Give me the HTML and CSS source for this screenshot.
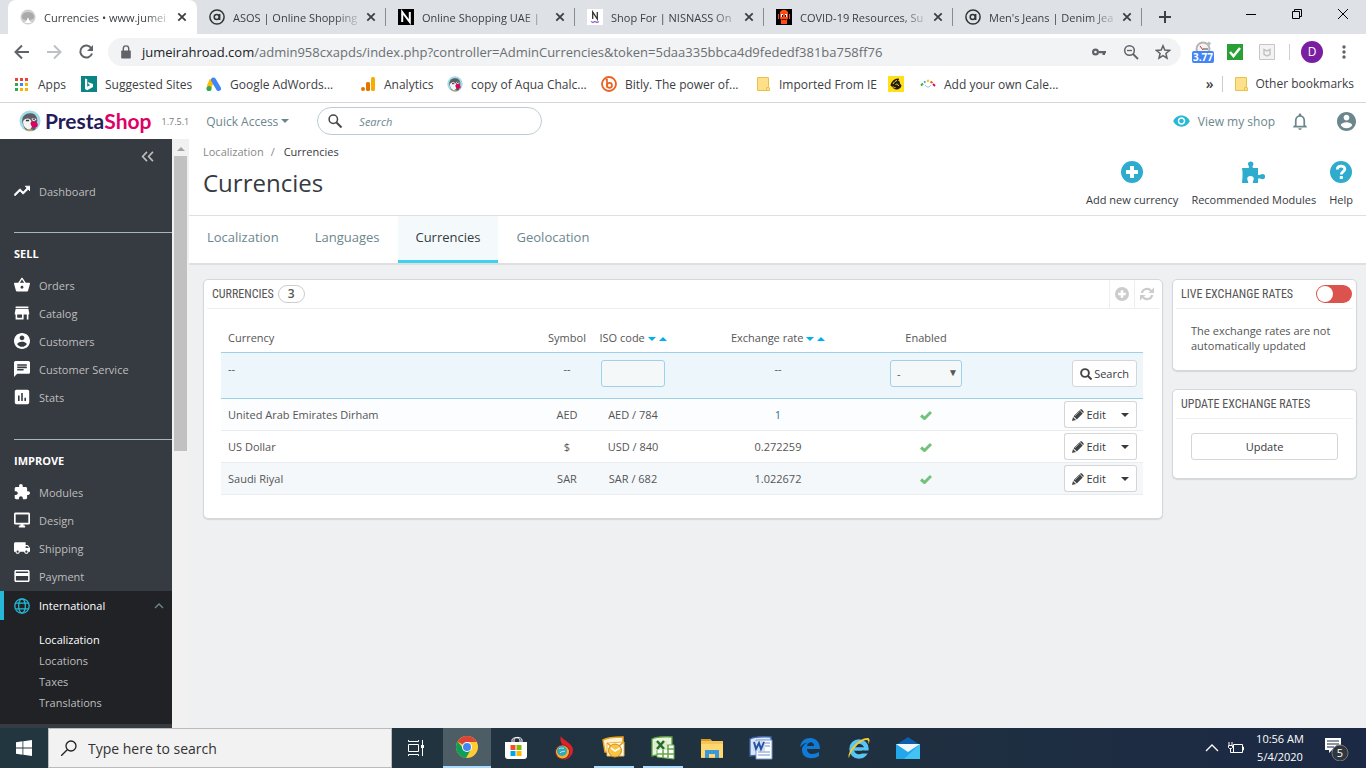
FILE: index.html
```html
<!DOCTYPE html>
<html lang="en">
<head>
<meta charset="utf-8">
<title>Currencies</title>
<link rel="stylesheet" href="styles.css">
</head>
<body>
<svg class="defs" aria-hidden="true">
  <symbol id="x" viewBox="0 0 16 16"><path d="M4.300 4.300l7.400 7.400M11.700 4.300l-7.400 7.400" stroke="#3c4043" stroke-width="1.800"/></symbol>
  <symbol id="asos" viewBox="0 0 16 16"><circle cx="8" cy="8" r="7.100" fill="none" stroke="#333" stroke-width="1.500"/><circle cx="7.700" cy="8" r="2.500" fill="none" stroke="#333" stroke-width="1.500"/><path d="M10.600 5v6" stroke="#333" stroke-width="1.600"/></symbol>
  <symbol id="folder" viewBox="0 0 16 16"><path d="M2.500 1.500h11v9.500l1 1v2.500h-12z" fill="#ffe08a" stroke="#e9c048"/><path d="M11.500 14.500v-3h2" fill="none" stroke="#e9c048"/></symbol>
  <symbol id="puffin" viewBox="0 0 24 24"><circle cx="12" cy="12" r="11.500" fill="#a4dbe8"/><path d="M3.500 13C3 6 8 3 13 3.500c5 .5 7 4 7 8.500l-2 9c-4 3-10 2-12-1z" fill="#5b5f63"/><path d="M4.500 12c2-3 6-3.500 8-1.500 1.500 1.500 1 4 1.500 6 .4 2-1 4.500-3.500 5-3.500-1-6.500-4.500-6-9.500z" fill="#f4f4f4"/><path d="M13.500 9.500c2-1.500 4.500-1 5.500 1l-3.500 2z" fill="#f4f4f4"/><path d="M7.500 11.500h3.500M15 10h2.500" stroke="#333" stroke-width="1.500"/><path d="M12.500 14c2.500-2.500 5.500-2 7.500.5 1 1.500.5 3-.5 4.500-1.500-.8-2.500-.6-3.500.5-2-.8-3.500-3-3.500-5.500z" fill="#df0067"/><path d="M8 22c1-1.500 6-1.500 8 0-2 1.300-6 1.300-8 0z" fill="#c9a06a"/></symbol>
  <symbol id="plusc" viewBox="0 0 22 22"><circle cx="11" cy="11" r="11" fill="currentColor"/><path d="M11 5v12M5 11h12" stroke="#fff" stroke-width="4"/></symbol>
  <symbol id="check" viewBox="0 0 12 10"><path d="M1 5.500l3.500 3L11 2" fill="none" stroke="#72c279" stroke-width="3"/></symbol>
  <symbol id="pencil" viewBox="0 0 12 12"><path d="M0 12l1-4 3 3zM1.600 7.200L7.500 1.300l3.200 3.200-5.900 5.900zM8.200.7c.6-.6 1.300-.6 1.900 0l1.200 1.200c.6.6.6 1.300 0 1.900l-.2.200L8 .9z" fill="#444"/><path d="M3 7l4.500-4.500" stroke="#bbb" stroke-width=".7"/></symbol>
  <symbol id="person" viewBox="2 2 20 20"><path d="M12 2C6.480 2 2 6.480 2 12s4.480 10 10 10 10-4.480 10-10S17.520 2 12 2zm0 3c1.660 0 3 1.340 3 3s-1.340 3-3 3-3-1.340-3-3 1.340-3 3-3zm0 14.200c-2.500 0-4.710-1.280-6-3.220.03-1.990 4-3.080 6-3.080 1.990 0 5.970 1.090 6 3.080-1.290 1.940-3.500 3.220-6 3.220z" fill="currentColor"/></symbol>
</svg>

<div class="tabstrip">
  <div class="tab tab-active">
    <svg class="i16" viewBox="0 0 16 16"><circle cx="8" cy="8" r="7.500" fill="#cfcfcf"/><path d="M2 9c-1-3 2-6 6-6s7 3 6 6c-2 2-4 2-6 2s-5 0-6-2z" fill="#aaa"/><path d="M4 14c2-1 3-2 3.500-5h1c.5 3 2 4 3.500 5z" fill="#fff"/></svg>
    <span class="tab-title">Currencies • www.jumei</span><button class="tab-x" aria-label="Close tab"><svg><use href="#x"/></svg></button>
  </div>
  <div class="tab"><svg class="i16"><use href="#asos"/></svg><span class="tab-title">ASOS | Online Shopping</span><button class="tab-x" aria-label="Close tab"><svg><use href="#x"/></svg></button></div>
  <div class="tab"><svg class="i16" viewBox="0 0 16 16"><path d="M0 0h16v16H0z"/><path d="M4.200 13V3l7.600 10V3" fill="none" stroke="#fff" stroke-width="2"/></svg><span class="tab-title">Online Shopping UAE |</span><button class="tab-x" aria-label="Close tab"><svg><use href="#x"/></svg></button></div>
  <div class="tab"><svg class="i16" viewBox="0 0 16 16"><path d="M0 0h16v16H0z" fill="#fff"/><path d="M5.700 10V3l4.600 7V3" fill="none" stroke="#333" stroke-width="1.300"/><path d="M4 12.500l2 1 2-1 2 1 2-1" fill="none" stroke="#8d62c8" stroke-width="1.200"/></svg><span class="tab-title">Shop For | NISNASS On</span><button class="tab-x" aria-label="Close tab"><svg><use href="#x"/></svg></button></div>
  <div class="tab"><svg class="i16" viewBox="0 0 16 16"><path d="M0 0h16v16H0z"/><path d="M4 3c2-3 6-3 8 0v6c0 1-1 1-1 2v4H5v-4c0-1-1-1-1-2zM2 5h1v5H2zM13 5h1v5h-1z" fill="#ff4a12"/><path d="M5 5h2v3H5zM9 5h2v3H9z" fill="#fff"/><path d="M6 6h1v2H6zM9 6h1v2H9z"/><path d="M5.500 10.500h5" stroke="#700"/></svg><span class="tab-title">COVID-19 Resources, Su</span><button class="tab-x" aria-label="Close tab"><svg><use href="#x"/></svg></button></div>
  <div class="tab"><svg class="i16"><use href="#asos"/></svg><span class="tab-title">Men's Jeans | Denim Jea</span><button class="tab-x" aria-label="Close tab"><svg><use href="#x"/></svg></button></div>
  <button class="newtab" aria-label="New tab"><svg class="i16" viewBox="0 0 16 16"><path d="M8 2v12M2 8h12" stroke="#3c4043" stroke-width="2"/></svg></button>
  <div class="winbtns">
    <button aria-label="Minimize"><svg viewBox="0 0 10 10"><path d="M0 5.500h10" stroke="#000"/></svg></button>
    <button aria-label="Restore"><svg viewBox="0 0 10 10"><path d="M.5 2.500h7v7h-7zM2.500 2.500v-2h7v7h-2" fill="none" stroke="#000"/></svg></button>
    <button aria-label="Close"><svg viewBox="0 0 10 10"><path d="M0 0l10 10M10 0L0 10" stroke="#000"/></svg></button>
  </div>
</div>

<div class="toolbar">
  <button class="nav" aria-label="Back"><svg viewBox="0 0 16 16"><path d="M15 8H2M8 1.500L1.500 8 8 14.500" fill="none" stroke="#5f6368" stroke-width="2"/></svg></button>
  <button class="nav" aria-label="Forward"><svg viewBox="0 0 16 16"><path d="M1 8h13M8 1.500L14.500 8 8 14.500" fill="none" stroke="#bdc1c6" stroke-width="2"/></svg></button>
  <button class="nav" aria-label="Reload"><svg viewBox="0 0 16 16"><path d="M13.300 4.200A6 6 0 1 0 14 9.500" fill="none" stroke="#5f6368" stroke-width="2"/><path d="M15 1v6H9z" fill="#5f6368"/></svg></button>
  <div class="omnibox">
    <svg class="i16" viewBox="0 0 16 16"><path d="M4 6.500h8a.8.8 0 0 1 .8.8v6.400a.8.800 0 0 1-.8.8H4a.8.8 0 0 1-.8-.8V7.300a.8.8 0 0 1 .8-.8z" fill="#5f6368"/><path d="M5.300 7V4.600a2.700 2.700 0 0 1 5.400 0V7" fill="none" stroke="#5f6368" stroke-width="1.400"/></svg>
    <span class="url"><b>jumeirahroad.com</b>/admin958cxapds/index.php?controller=AdminCurrencies&amp;token=5daa335bbca4d9fededf381ba758ff76</span>
    <svg class="i16" viewBox="0 0 16 16"><path d="M4.500 4.500a3.500 3.500 0 1 1 0 7 3.500 3.500 0 0 1 0-7zm0 2.200a1.300 1.300 0 1 0 0 2.600 1.300 1.300 0 0 0 0-2.600zM8 7h7v2.200h-1V11h-2.500V9.200H8z" fill="#5f6368" fill-rule="evenodd"/></svg>
    <svg class="i16" viewBox="0 0 16 16"><circle cx="6.500" cy="6.500" r="4.800" fill="none" stroke="#5f6368" stroke-width="1.500"/><path d="M10 10l5 5" stroke="#5f6368" stroke-width="1.800"/><path d="M4 6.500h5" stroke="#5f6368" stroke-width="1.300"/></svg>
    <svg class="i16" viewBox="0 0 16 16"><path d="M8 1.800l1.800 4.300 4.700.4-3.600 3 1.100 4.600L8 11.600l-4 2.500 1.100-4.600-3.600-3 4.700-.4z" fill="none" stroke="#5f6368" stroke-width="1.500"/></svg>
  </div>
  <div class="exts">
    <svg class="ext" viewBox="0 0 22 24"><circle cx="11" cy="9" r="6.500" fill="#f4f4f4" stroke="#b5b5b5" stroke-width="2"/><circle cx="17" cy="3.500" r="1.700" fill="#bbb"/><path d="M11 10L8 6" stroke="#e22"/><path d="M11 9h5" stroke="#444"/><rect y="11" width="22" height="12" rx="2" fill="#4285f4"/><text x="11" y="21" text-anchor="middle" class="badge">3.77</text></svg>
    <svg class="i16" viewBox="0 0 16 16"><path d="M0 0h16v16H0z" fill="#28a035"/><path d="M3 8l3.500 4L13 4" fill="none" stroke="#fff" stroke-width="2.500"/></svg>
    <svg class="i16" viewBox="0 0 16 16"><path d="M.5.5h15v15H.5z" fill="#f3f3f3" stroke="#c6c6c6"/><path d="M5 5.500v5L8 12l3-1.500v-5L8 7z" fill="none" stroke="#c3c3c3" stroke-width="1.500"/></svg>
  </div>
  <span class="vsep"></span>
  <span class="avatar">D</span>
  <button class="dots" aria-label="Menu"><svg class="i16" viewBox="0 0 16 16" fill="#5f6368"><circle cx="8" cy="3" r="1.700"/><circle cx="8" cy="8" r="1.700"/><circle cx="8" cy="13" r="1.700"/></svg></button>
</div>

<nav class="bookmarks">
  <a href="#"><svg class="i16" viewBox="0 0 16 16"><path d="M1 2h3v3H1zM6 2h3v3H6z" fill="#ea4335"/><path d="M11 2h3v3h-3z" fill="#ea4335"/><path d="M1 7h3v3H1z" fill="#34a853"/><path d="M6 7h3v3H6z" fill="#4285f4"/><path d="M11 7h3v3h-3zM6 12h3v3H6zM11 12h3v3h-3z" fill="#f4b400"/><path d="M1 12h3v3H1z" fill="#34a853"/></svg>Apps</a>
  <a href="#"><svg class="i16" viewBox="0 0 16 16"><path d="M0 0h16v16H0z" fill="#0c8484"/><path d="M4 2.500l2.200.8v7.500l3-1.700-1.600-.8-.9-2.300 5.300 1.900V11l-5.800 3.300L4 13z" fill="#fff"/></svg>Suggested Sites</a>
  <a href="#"><svg class="i16" viewBox="0 0 16 16"><path d="M6 4L3 11" stroke="#fbbc04" stroke-width="5"/><path d="M7.500 4l5 8.500" stroke="#4285f4" stroke-width="5" stroke-linecap="round"/><circle cx="3" cy="12.500" r="2.600" fill="#34a853"/></svg>Google AdWords...</a>
  <a href="#"><svg class="i16" viewBox="0 0 16 16"><rect x="11" y="1" width="4" height="14" rx="1.500" fill="#f9ab00"/><rect x="6" y="6" width="4" height="9" rx="1.500" fill="#e37400"/><circle cx="3" cy="13" r="2" fill="#e37400"/></svg>Analytics</a>
  <a href="#"><svg class="i16"><use href="#puffin"/></svg>copy of Aqua Chalc...</a>
  <a href="#"><svg class="i16" viewBox="0 0 16 16"><circle cx="8" cy="8" r="7" fill="none" stroke="#ee6123" stroke-width="1.800"/><path d="M4.500 3.500H6v8" fill="none" stroke="#ee6123" stroke-width="1.700"/><circle cx="8.500" cy="9.300" r="2.500" fill="none" stroke="#ee6123" stroke-width="1.700"/></svg>Bitly. The power of...</a>
  <a href="#"><svg class="i16"><use href="#folder"/></svg>Imported From IE</a>
  <a href="#" aria-label="Mailchimp"><svg class="i16" viewBox="0 0 16 16"><path d="M0 0h16v16H0z" fill="#ffe01b"/><path d="M2.500 9.500C3 5.500 7 2 10.500 2.500c1 .6.500 1.500-.5 2 1.500.3 2 1.500 2 3l1.500 2c-.5 3.500-5 5-8 3-.8-1-1-1.700-3-3z" fill="#241c15"/><path d="M5 8c1-2 2.500-3 4-3.500M7.500 8.500c1.500-1 3 0 3 1.500M5 10.500c.5 1 1.500 1.500 2.500 1" fill="none" stroke="#ffe01b"/></svg></a>
  <a href="#"><svg class="i16" viewBox="0 0 16 16" fill="none" stroke-width="2"><path d="M1 9.500l2-2" stroke="#3fae49"/><path d="M4 6.500l1.500-1" stroke="#29abe2"/><path d="M7 5l2-.5" stroke="#f7c600"/><path d="M10.500 5.500l2 1.500" stroke="#f15a24"/><path d="M13 8l2 2" stroke="#d4145a"/><path d="M5 9l2 2h2l2-2" stroke="#9cc" stroke-width="1"/></svg>Add your own Cale...</a>
  <a href="#" class="more" aria-label="More bookmarks">»</a>
  <a href="#" class="other"><svg class="i16"><use href="#folder"/></svg>Other bookmarks</a>
</nav>

<header class="apphead">
  <a href="#" class="logo"><svg class="i22"><use href="#puffin"/></svg><span class="lp">Presta</span><span class="ls">Shop</span></a>
  <span class="version">1.7.5.1</span>
  <button class="quick">Quick Access <i class="caret"></i></button>
  <label class="search"><svg class="i16" viewBox="0 0 16 16"><circle cx="6.300" cy="6.300" r="4.200" fill="none" stroke="#474747" stroke-width="1.500"/><path d="M9.500 9.500l5 5" stroke="#474747" stroke-width="2"/></svg><input type="text" placeholder="Search" aria-label="Search"></label>
  <a href="#" class="viewshop"><svg viewBox="1 4 22 16"><path d="M12 4.500C7 4.500 2.730 7.610 1 12c1.730 4.390 6 7.500 11 7.500s9.270-3.110 11-7.500c-1.730-4.390-6-7.500-11-7.500zM12 17c-2.760 0-5-2.240-5-5s2.240-5 5-5 5 2.240 5 5-2.240 5-5 5zm0-8c-1.660 0-3 1.340-3 3s1.340 3 3 3 3-1.340 3-3-1.340-3-3-3z" fill="#25b9d7"/></svg>View my shop</a>
  <button class="bell" aria-label="Notifications"><svg viewBox="4 2 16 20"><path d="M12 22c1.100 0 2-.9 2-2h-4c0 1.100.9 2 2 2zm6-6v-5c0-3.070-1.630-5.640-4.500-6.320V4c0-.83-.67-1.500-1.500-1.500s-1.500.67-1.500 1.500v.68C7.640 5.360 6 7.920 6 11v5l-2 2v1h16v-1l-2-2zm-2 1H8v-6c0-2.480 1.510-4.500 4-4.500s4 2.020 4 4.500v6z" fill="#6c868e"/></svg></button>
  <button class="user" aria-label="Account"><svg><use href="#person"/></svg></button>
</header>

<div class="body">
  <aside class="side">
    <button class="collapse" aria-label="Collapse menu"><svg viewBox="0 0 12 10"><path d="M5.500.7L1.500 5l4 4.300M11 .7L7 5l4 4.300" fill="none" stroke="#bebebe" stroke-width="1.500"/></svg></button>
    <a href="#" class="item dash"><svg viewBox="2 2 20 20"><path d="M16 6l2.290 2.290-4.880 4.880-4-4L2 16.590 3.410 18l6-6 4 4 6.300-6.290L22 12V6z" fill="#fff" stroke="#fff"/></svg>Dashboard</a>
    <h2>SELL</h2>
    <ul>
      <li><a href="#" class="item"><svg viewBox="1 1 22 22"><path d="M17.210 9l-4.380-6.560c-.19-.28-.51-.42-.83-.42-.32 0-.64.140-.83.430L6.790 9H2c-.55 0-1 .45-1 1 0 .09.010.18.040.270l2.540 9.270c.23.840 1 1.460 1.920 1.460h13c.92 0 1.690-.62 1.930-1.460l2.540-9.270L23 10c0-.55-.45-1-1-1h-4.790zM9 9l3-4.400L15 9H9zm3 8c-1.100 0-2-.9-2-2s.9-2 2-2 2 .9 2 2-.9 2-2 2z" fill="#fff"/></svg>Orders</a></li>
      <li><a href="#" class="item"><svg viewBox="2 2 20 20"><path d="M20 4H4v2h16V4zm1 10v-2l-1-5H4l-1 5v2h1v6h10v-6h4v6h2v-6h1zm-9 4H6v-4h6v4z" fill="#fff"/></svg>Catalog</a></li>
      <li><a href="#" class="item"><svg class="w"><use href="#person"/></svg>Customers</a></li>
      <li><a href="#" class="item"><svg viewBox="2 2 20 20"><path d="M20 2H4c-1.100 0-1.990.9-1.990 2L2 22l4-4h14c1.100 0 2-.9 2-2V4c0-1.100-.9-2-2-2zM6 9h12v2H6V9zm8 5H6v-2h8v2zm4-6H6V6h12v2z" fill="#fff"/></svg>Customer Service</a></li>
      <li><a href="#" class="item"><svg viewBox="2 2 20 20"><path d="M19 3H5c-1.100 0-2 .9-2 2v14c0 1.100.9 2 2 2h14c1.100 0 2-.9 2-2V5c0-1.100-.9-2-2-2zM9 17H7v-7h2v7zm4 0h-2V7h2v10zm4 0h-2v-4h2v4z" fill="#fff"/></svg>Stats</a></li>
    </ul>
    <h2>IMPROVE</h2>
    <ul>
      <li><a href="#" class="item"><svg viewBox="1 1 22 22"><path d="M20.500 11H19V7c0-1.100-.9-2-2-2h-4V3.500C13 2.120 11.880 1 10.500 1S8 2.120 8 3.500V5H4c-1.100 0-1.990.9-1.990 2v3.800H3.500c1.490 0 2.700 1.210 2.700 2.700s-1.210 2.700-2.700 2.700H2V20c0 1.100.9 2 2 2h3.800v-1.500c0-1.490 1.210-2.700 2.700-2.700 1.490 0 2.700 1.210 2.700 2.700V22H17c1.100 0 2-.9 2-2v-4h1.500c1.380 0 2.500-1.120 2.500-2.500S21.880 11 20.500 11z" fill="#fff"/></svg>Modules</a></li>
      <li><a href="#" class="item"><svg viewBox="1 1 22 22"><path d="M21 2H3c-1.100 0-2 .9-2 2v12c0 1.100.9 2 2 2h7v2H8v2h8v-2h-2v-2h7c1.100 0 2-.9 2-2V4c0-1.100-.9-2-2-2zm0 14H3V4h18v12z" fill="#fff" stroke="#fff" stroke-width=".6"/></svg>Design</a></li>
      <li><a href="#" class="item"><svg viewBox="1 1 22 22"><path d="M20 8h-3V4H3c-1.100 0-2 .9-2 2v11h2c0 1.660 1.340 3 3 3s3-1.340 3-3h6c0 1.660 1.340 3 3 3s3-1.340 3-3h2v-5l-3-4zM6 18.500c-.83 0-1.500-.67-1.500-1.500s.67-1.500 1.500-1.500 1.500.67 1.500 1.500-.67 1.500-1.500 1.500zm13.500-9l1.960 2.500H17V9.500h2.500zm-1.500 9c-.83 0-1.500-.67-1.500-1.500s.67-1.500 1.500-1.500 1.500.67 1.500 1.500-.67 1.500-1.500 1.500z" fill="#fff"/></svg>Shipping</a></li>
      <li><a href="#" class="item"><svg viewBox="1.500 2 21 20"><path d="M20 4H4c-1.110 0-1.990.89-1.990 2L2 18c0 1.110.89 2 2 2h16c1.110 0 2-.89 2-2V6c0-1.110-.89-2-2-2zm0 14H4v-6h16v6zm0-10H4V6h16v2z" fill="#fff"/></svg>Payment</a></li>
      <li class="open"><a href="#" class="item"><svg viewBox="0 0 20 20" fill="none" stroke="#25b9d7" stroke-width="1.600"><circle cx="10" cy="10" r="9"/><ellipse cx="10" cy="10" rx="4.200" ry="9"/><path d="M2 6.500h16M2 13.500h16"/></svg>International<svg class="chev" viewBox="0 0 10 6"><path d="M1 5l4-4 4 4" fill="none" stroke="#6c868e" stroke-width="1.400"/></svg></a>
        <ul class="sub"><li class="cur"><a href="#">Localization</a></li><li><a href="#">Locations</a></li><li><a href="#">Taxes</a></li><li><a href="#">Translations</a></li></ul>
      </li>
    </ul>
  </aside>
  <div class="scroll"><i class="up"></i><div class="thumb"></div></div>
  <main>
    <div class="pagehead">
      <div>
        <p class="crumb"><a href="#">Localization</a><span>/</span>Currencies</p>
        <h1>Currencies</h1>
      </div>
      <div class="actions">
        <a href="#"><svg class="i22 teal"><use href="#plusc"/></svg>Add new currency</a>
        <a href="#"><svg class="i24" viewBox="0 0 24 22"><path d="M0 7h6.500C8 6 6 4.500 6 3a2.700 2.500 0 0 1 5.400 0c0 1.500-2 3 0 4H16v6.500c1 1.500 2.500-.5 4.500-.5a2.600 2.600 0 0 1 0 5.200c-2 0-3.500-2-4.500-.2V22h-5c-1-1 .8-2.500.8-4a3.300 3 0 0 0-6.600 0c0 1.500 1.800 3 .8 4H0c.5-5 1-10 0-15z" fill="#2eacce"/></svg>Recommended Modules</a>
        <a href="#"><svg class="i22" viewBox="0 0 22 22"><circle cx="11" cy="11" r="11" fill="#2eacce"/><path d="M7.300 8.500c0-4.500 7.500-4.500 7.500-.5 0 2.700-3.500 2.700-3.500 5.500" fill="none" stroke="#fff" stroke-width="2.800"/><path d="M9.800 15h3v3h-3z" fill="#fff"/></svg>Help</a>
      </div>
    </div>
    <nav class="subtabs"><a href="#">Localization</a><a href="#">Languages</a><a href="#" class="on">Currencies</a><a href="#">Geolocation</a></nav>
    <div class="content">
      <section class="panel listing">
        <div class="ph"><h3>CURRENCIES</h3><span class="count">3</span>
          <div class="tools"><button aria-label="Add new"><svg><use href="#plusc"/></svg></button><button aria-label="Refresh list"><svg viewBox="0 0 14 14"><path d="M1.800 6a5.300 5.300 0 0 1 9.200-2.300M12.200 8a5.300 5.300 0 0 1-9.200 2.300" fill="none" stroke="#ccc" stroke-width="2.200"/><path d="M14 .5v5.500H8.500zM0 13.500V8h5.500z" fill="#ccc"/></svg></button></div>
        </div>
        <table>
          <colgroup><col><col class="c-sym"><col class="c-iso"><col class="c-rate"><col class="c-en"><col class="c-act"></colgroup>
          <thead>
            <tr><th class="l">Currency</th><th>Symbol</th><th>ISO code <i class="caret"></i> <i class="caret rev"></i></th><th>Exchange rate <i class="caret"></i> <i class="caret rev"></i></th><th>Enabled</th><th></th></tr>
            <tr class="filter"><td class="l">--</td><td>--</td><td><input type="text" aria-label="Filter by ISO code"></td><td>--</td><td><span class="sel"><select aria-label="Filter by enabled"><option>-</option><option>Yes</option><option>No</option></select></span></td><td class="r"><button class="btn find"><svg viewBox="0 0 12 12"><circle cx="5" cy="5" r="3.900" fill="none" stroke="#444" stroke-width="1.900"/><path d="M8 8l3.500 3.500" stroke="#444" stroke-width="2"/></svg>Search</button></td></tr>
          </thead>
          <tbody>
            <tr class="t1"><td class="l">United Arab Emirates Dirham</td><td>AED</td><td>AED / 784</td><td class="rate">1</td><td><svg class="ck"><use href="#check"/></svg></td><td class="r"><span class="group"><button class="btn"><svg><use href="#pencil"/></svg>Edit</button><button class="btn" aria-label="More actions"><i class="caret"></i></button></span></td></tr>
            <tr><td class="l">US Dollar</td><td>$</td><td>USD / 840</td><td>0.272259</td><td><svg class="ck"><use href="#check"/></svg></td><td class="r"><span class="group"><button class="btn"><svg><use href="#pencil"/></svg>Edit</button><button class="btn" aria-label="More actions"><i class="caret"></i></button></span></td></tr>
            <tr class="t3"><td class="l">Saudi Riyal</td><td>SAR</td><td>SAR / 682</td><td>1.022672</td><td><svg class="ck"><use href="#check"/></svg></td><td class="r"><span class="group"><button class="btn"><svg><use href="#pencil"/></svg>Edit</button><button class="btn" aria-label="More actions"><i class="caret"></i></button></span></td></tr>
          </tbody>
        </table>
      </section>
      <div class="rail">
        <section class="panel"><div class="ph"><h3><label for="live">LIVE EXCHANGE RATES</label></h3><input type="checkbox" id="live" class="switch"></div><p>The exchange rates are not automatically updated</p></section>
        <section class="panel"><div class="ph"><h3>UPDATE EXCHANGE RATES</h3></div><button class="btn update">Update</button></section>
      </div>
    </div>
  </main>
</div>

<footer class="taskbar">
  <button class="start" aria-label="Start"><svg class="i16" viewBox="0 0 16 16" fill="#fff"><path d="M0 2.200l6.500-.9v6.300H0zM7.300 1.200L16 0v7.600H7.300zM0 8.400h6.500v6.300L0 13.800zM7.300 8.400H16V16l-8.700-1.200z"/></svg></button>
  <label class="tsearch"><svg class="i16" viewBox="0 0 16 16" fill="none" stroke="#222" stroke-width="1.300"><circle cx="10" cy="6" r="5"/><path d="M6.500 9.500L0 16"/></svg><input type="text" placeholder="Type here to search" aria-label="Type here to search"></label>
  <button class="app tv" aria-label="Task view"><svg viewBox="0 0 24 24" fill="none" stroke="#fff"><path d="M4.500 8.500h10v7h-10zM4.500 4v1.500h10V4M4.500 20v-1.500h10V20M18.500 4v5M18.500 12v8"/><path d="M17 9h3v3h-3z" fill="#fff" stroke="none"/></svg></button>
  <button class="app hot" aria-label="Chrome"><svg viewBox="0 0 24 24"><circle cx="12" cy="12" r="11" fill="#fc3"/><path d="M12 12L2.500 6.500A11 11 0 0 1 21.500 6.500L22 7H12z" fill="#db4437"/><path d="M2.500 6.500A11 11 0 0 0 11 23l4.500-8L12 12 8 13z" fill="#0f9d58"/><circle cx="12" cy="12" r="5" fill="#fff"/><circle cx="12" cy="12" r="4" fill="#4285f4"/></svg></button>
  <button class="app" aria-label="Store"><svg viewBox="0 0 24 24"><path d="M1 6h22v14c0 2-1 3-3 3H4c-2 0-3-1-3-3z" fill="#fff"/><path d="M8 6V4c0-3 8-3 8 0v2M10 6V4c0-4 8-3 8 0v2" fill="none" stroke="#fff"/><path d="M6.500 9h5v5h-5z" fill="#f25022"/><path d="M12.500 9h5v5h-5z" fill="#7fba00"/><path d="M6.500 15h5v5h-5z" fill="#00a4ef"/><path d="M12.500 15h5v5h-5z" fill="#ffb900"/></svg></button>
  <button class="app" aria-label="Torch"><svg viewBox="0 0 24 24"><path d="M8 0c1 4 12 7 12 14 0 5-4 9-9 10 3-4 5-8 2-12-3-3-7-6-5-12z" fill="#e0202a"/><circle cx="9.500" cy="16" r="7.500" fill="#8a2a20"/><circle cx="9.500" cy="16" r="6.500" fill="#f3b02f"/><circle cx="9" cy="15" r="5" fill="#35a6b9"/><path d="M6 13c2-2 3 0 5-1M7 17c1-2 3-1 5-2" stroke="#bdeef2" fill="none"/></svg></button>
  <button class="app run" aria-label="Outlook"><svg viewBox="0 0 24 24"><path d="M1 4c5-3 13-3 20-3v15H3z" fill="#fff4cf" stroke="#eda321" stroke-width="1.500"/><path d="M5 7l17-1v14H5z" fill="#fff" stroke="#f2b33c"/><path d="M5 7l8 6 9-7" fill="none" stroke="#e79b17" stroke-width="1.500"/><circle cx="13" cy="14.500" r="6.500" fill="#f9c440" stroke="#d98a12"/><path d="M9 12l4 3 5-3" fill="none" stroke="#fff" stroke-width="1.600"/></svg></button>
  <button class="app run" aria-label="Excel"><svg viewBox="0 0 24 24"><path d="M1 3c5-3 13-2 20-2v15L1 20z" fill="#e8f3dc" stroke="#5ba23e" stroke-width="1.300"/><path d="M6 9h17v14L6 21z" fill="#fff" stroke="#6ead4c"/><path d="M12 9v13M17 9v13M6 13h17M6 18h17" stroke="#63a844" stroke-width="1.500"/><path d="M3 5h13v9H3z" fill="#dcedcf"/><path d="M6 5l7 8M13 5l-7 8" stroke="#286b28" stroke-width="2.500"/></svg></button>
  <button class="app" aria-label="File Explorer"><svg viewBox="0 0 24 24"><path d="M1 3h9l2 2h11v17H1z" fill="#f5c55a"/><path d="M1 3h9l2 2H1z" fill="#d99a20"/><path d="M1 8h22v13H1z" fill="#ffd970"/><path d="M5 14h14v8h-4v-4H9v4H5z" fill="#3c96dc"/></svg></button>
  <button class="app" aria-label="Word"><svg viewBox="0 0 24 24"><path d="M1 3c5-3 13-2 21-2v17L1 20z" fill="#dbe7f8" stroke="#3b67b1" stroke-width="1.300"/><path d="M7 4h16v19H7z" fill="#fff" stroke="#7195cd"/><path d="M16 7h5M16 10h5M9 16h12M9 19h12" stroke="#6d91ca"/><path d="M4 5h12v10H4z" fill="#cfdef5"/><path d="M5 6l2 7 3-6 2 6 3-7" fill="none" stroke="#2452a0" stroke-width="1.900"/></svg></button>
  <button class="app" aria-label="Edge"><svg viewBox="0 0 24 24"><path d="M2 11C3 5 7 2 12 2c7 0 10 5 10 11H9c0 6 7 6 12 3v4c-6 4-17 3-17-6 0-4 3-6 5-7-3 0-5 2-7 4zm7-1h7c0-5-6-5-7 0z" fill="#0f7bd7"/></svg></button>
  <button class="app" aria-label="Internet Explorer"><svg viewBox="0 0 24 24"><circle cx="12" cy="13" r="7.500" fill="none" stroke="#58c5f2" stroke-width="4.500"/><path d="M7 13h14" stroke="#58c5f2" stroke-width="3.500"/><path d="M15 16h8" stroke="#203241" stroke-width="3"/><path d="M2 22C-1 17 12 1 21 2c3 1 1 5 0 6 1-3 0-4-2-4C12 5 3 16 2 22z" fill="#f9c930"/></svg></button>
  <button class="app" aria-label="Mail"><svg viewBox="0 0 24 24"><path d="M0 9l12-8 12 8z" fill="#0d5fae"/><path d="M0 8h24v15H0z" fill="#22a7ea"/><path d="M24 8v15H8z" fill="#43c3f5"/><path d="M0 8h24l-12 8z" fill="#f0f6fb"/></svg></button>
  <div class="tray">
    <svg class="i16" viewBox="0 0 16 16"><path d="M2 11l6-6 6 6" fill="none" stroke="#fff" stroke-width="1.300"/></svg>
    <svg class="i16" viewBox="0 0 16 16" fill="none" stroke="#fff"><path d="M5.500 4.500h9v8h-9zM14.500 7h1v3h-1M1 2v3M4 2v3M.5 5.500h4v2l-1 1h-2l-1-1zM2.500 9v3.500H6"/></svg>
    <div class="clock"><span>10:56 AM</span><span>5/4/2020</span></div>
    <svg class="note" viewBox="0 0 26 26"><path d="M1 3h16v12H8l-3 3v-3H1z" fill="#fff"/><path d="M3 6h12M3 9h12M3 12h7" stroke="#1c2b43"/><circle cx="16" cy="18" r="8" fill="#30363d" stroke="#777"/><text x="16" y="22" text-anchor="middle" class="five">5</text></svg>
  </div>
</footer>
</body>
</html>
```

FILE: styles.css
```css
* { box-sizing: border-box; }
body { margin: 0; height: 100vh; display: flex; flex-direction: column; overflow: hidden; font-family: "Open Sans", "Noto Sans", sans-serif; font-size: 11px; color: #555; background: #fff; }
button { border: 0; padding: 0; background: none; font: inherit; color: inherit; display: flex; align-items: center; justify-content: center; }
input, select { font: inherit; }
a { color: inherit; text-decoration: none; }
ul, h1, h2, h3, p { margin: 0; padding: 0; font-weight: 400; list-style: none; }
svg { flex: none; display: block; }
.defs { position: absolute; width: 0; height: 0; }
.i16 { width: 16px; height: 16px; }
.i22 { width: 22px; height: 22px; }
.i24 { width: 24px; height: 22px; }

/* browser tabs */
.tabstrip { height: 34px; flex: none; display: flex; background: #dee1e6; padding-left: 8px; color: #3c4043; }
.tab { flex: 0 1 189px; min-width: 0; display: flex; align-items: center; padding: 0 7px 0 12px; position: relative; }
.tab::after { content: ""; position: absolute; right: 0; top: 8px; height: 18px; width: 1px; background: #888c91; }
.tab-active { background: #fff; border-radius: 8px 8px 0 0; }
.tab-active::after { display: none; }
.tab-title { flex: 1; min-width: 0; margin: 0 0 0 8px; overflow: hidden; white-space: nowrap; -webkit-mask-image: linear-gradient(90deg, #000 78%, transparent); mask-image: linear-gradient(90deg, #000 78%, transparent); }
.tab-x svg { width: 16px; height: 16px; }
.newtab { width: 46px; }
.winbtns { margin-left: auto; display: flex; height: 28px; }
.winbtns button { width: 46px; }
.winbtns svg { width: 10px; height: 10px; }

/* address bar */
.toolbar { height: 36px; flex: none; display: flex; align-items: center; padding: 0 14px 0 6px; }
.nav { width: 32px; height: 32px; }
.nav svg { width: 16px; height: 16px; }
.omnibox { flex: 1; height: 28px; margin-left: 6px; border-radius: 14px; background: #f1f3f4; display: flex; align-items: center; gap: 16px; padding: 0 10px; }
.url { flex: 1; margin-left: -8px; font-size: 13px; color: #6b6f73; white-space: nowrap; }
.url b { font-weight: 400; color: #202124; }
.exts { display: flex; align-items: center; gap: 16px; margin-left: 11px; }
.ext { width: 22px; height: 24px; margin-right: -3px; }
.badge { font-size: 10px; font-weight: 700; fill: #fff; }
.vsep { width: 1px; height: 16px; background: #cdd0d4; margin: 0 11px 0 14px; }
.avatar { width: 22px; height: 22px; border-radius: 50%; background: #7b1fa2; color: #fff; font-size: 12px; line-height: 22px; text-align: center; }
.dots { margin-left: 13px; }

.bookmarks { height: 33px; flex: none; display: grid; grid-template-columns: 67px 125px 154px 87px 154px 154px 133px 32px 1fr auto auto; align-items: center; padding: 0 12px 4px 14px; border-bottom: 1px solid #d6d6d6; font-size: 12px; color: #3c4043; white-space: nowrap; }
.bookmarks a { display: flex; align-items: center; gap: 8px; }
.bookmarks .more { font-size: 14px; font-weight: 600; padding-right: 9px; line-height: 16px; }
.bookmarks .other { border-left: 1px solid #ccc; padding-left: 10px; line-height: 16px; gap: 6px; }

/* back office header */
.apphead { height: 36px; flex: none; display: flex; align-items: center; padding: 0 10px 0 19px; font-size: 12px; color: #6c868e; }
.logo { display: flex; align-items: center; font: 700 21px/24px Lato, sans-serif; }
.logo svg { margin-right: 4px; }
.lp { color: #251b5b; }
.ls { color: #df0067; }
.version { margin-left: 10px; font-size: 9px; color: #777; }
.quick { margin-left: 17px; gap: 3px; }
.caret { display: inline-block; border: 4px solid transparent; border-top-color: currentColor; border-bottom: 0; vertical-align: middle; }
.rev { border-top: 0; border-bottom: 4px solid; border-left-color: transparent; border-right-color: transparent; }
.search { margin-left: 28px; flex: 0 1 225px; height: 28px; border: 1px solid #bbcdd2; border-radius: 14px; display: flex; align-items: center; padding: 0 12px 0 9px; }
.search input { flex: 1; min-width: 0; border: 0; outline: 0; background: none; font-size: 11px; padding: 0 0 0 16px; }
.search input::placeholder { color: #6c868e; font-style: italic; opacity: 1; }
.viewshop { margin-left: auto; display: flex; align-items: center; gap: 8px; }
.viewshop svg { width: 17px; height: 12px; }
.bell { margin-left: 18px; }
.bell svg { width: 14px; height: 17px; }
.user { margin-left: 30px; }
.user svg { width: 19px; height: 19px; color: #6c868e; }

/* sidebar */
.body { flex: 1; min-height: 0; display: flex; background: #eff0f2; }
.side { width: 172px; flex: none; background: #363a41; overflow: hidden; color: #bebebe; }
.collapse { margin: 12px 18px 0 auto; height: 11px; }
.collapse svg { width: 13px; height: 11px; }
.item { height: 28px; padding: 0 13px 0 14px; display: flex; align-items: center; gap: 9px; }
.item svg { width: 16px; height: 16px; }
.item .w { color: #fff; }
.dash { margin: 15px 0 27px; }
.side h2 { margin-left: 14px; padding-top: 13px; height: 39px; border-top: 1px solid #a6b7bc; font-size: 11px; line-height: 16px; font-weight: 700; color: #fff; }
.side ul + h2 { margin-top: 28px; }
.open { background: #202226; margin-top: 1px; }
.open > .item { height: 29px; border-left: 4px solid #25b9d7; padding: 0 8px 0 10px; color: #fff; }
.open .chev { width: 10px; height: 6px; margin-left: auto; }
.sub { padding: 9px 0 11px 39px; line-height: 21px; }
.sub .cur { color: #fff; }
.scroll { width: 17px; flex: none; background: #f1f1f1; }
.up { display: block; margin: 8px 0 0 5px; width: 0; border: 4px solid transparent; border-bottom-color: #a3a3a3; border-top: 0; }
.thumb { margin: 5px 2px; height: 50%; width: 13px; background: #c1c1c1; }

/* page heading */
main { flex: 1; min-width: 0; }
.pagehead { height: 77px; background: #fff; border-bottom: 1px solid #dfdfdf; display: flex; justify-content: space-between; padding: 5px 13px 0 14px; }
.crumb { line-height: 16px; color: #363a41; }
.crumb a { color: #888; }
.crumb span { margin: 0 9px 0 7px; color: #888; }
h1 { font-size: 24px; line-height: 32px; margin-top: 7px; color: #363a41; }
.actions { display: flex; gap: 13px; padding-top: 17px; color: #363a41; }
.actions a { display: flex; flex-direction: column; align-items: center; gap: 9px; line-height: 16px; }
.teal { color: #2eacce; }
.subtabs { display: flex; background: #fff; height: 49px; border-bottom: 2px solid #dfdfdf; padding-left: 1px; font-size: 13px; color: #6c868e; }
.subtabs a { padding: 0 17px; margin-right: 2px; line-height: 42px; }
.subtabs .on { background: #f4f9fc; color: #363a41; border-bottom: 3px solid #3ed2f0; }

/* panels */
.content { display: flex; align-items: flex-start; gap: 9px; padding: 14px 9px 0 14px; }
.panel { background: #fff; border: 1px solid #d3d8db; border-radius: 5px; box-shadow: 0 1px 1px #d3d8db; padding: 0 3px; }
.listing { flex: 1; min-width: 0; padding-bottom: 23px; }
.ph { height: 29px; border-bottom: 1px solid #eee; display: flex; align-items: center; padding-left: 5px; }
h3 { font: 12px/16px "Ubuntu Condensed", "Roboto Condensed", "Liberation Sans Narrow", "Open Sans", sans-serif; color: #555; white-space: nowrap; }
.count { margin-left: 4px; width: 27px; height: 18px; border: 1px solid #ccc; border-radius: 9px; text-align: center; line-height: 16px; font-size: 12px; font-weight: 600; }
.tools { margin-left: auto; display: flex; align-self: stretch; color: #ccc; }
.tools button { width: 25px; border-left: 1px solid #eee; }
.tools svg { width: 14px; height: 14px; }
table { width: calc(100% - 30px); margin: 14px 16px 0 14px; border-collapse: separate; border-spacing: 0; table-layout: fixed; color: #555; }
.c-sym { width: 50px; }
.c-iso { width: 82px; }
.c-rate { width: 208px; }
.c-en { width: 88px; }
.c-act { width: 173px; }
th, td { padding: 0; font-weight: 400; text-align: center; white-space: nowrap; }
th { height: 29px; }
th .caret { color: #00aff0; }
.l { text-align: left; padding-left: 7px; }
.r { padding-right: 6px; }
.filter td { height: 47px; border: solid #9ed0e8; border-width: 1px 0; background: #ecf6fb; vertical-align: top; padding-top: 7px; line-height: 17px; }
.filter input, .filter select { height: 27px; border: 1px solid #a0d0eb; border-radius: 3px; background: #f5f8f9; display: block; color: #555; }
.filter input { width: 64px; margin: 0 auto; }
.sel { position: relative; display: block; width: 72px; margin: 0 auto; }
.sel select { width: 100%; appearance: none; padding: 0 6px; }
.sel::after { content: "▼"; position: absolute; right: 4px; top: 4px; font-size: 10px; pointer-events: none; }
tbody td { height: 32px; border-bottom: 1px solid #eaedef; }
.t1 td { background: #fcfdfe; }
.t3 td { background: #f4f8fb; }
.t1 .rate { color: #2d6d9a; }
.ck { width: 12px; height: 10px; margin: 0 auto; }
.btn { height: 27px; border: 1px solid #d6d6d6; border-radius: 3px; background: #fff; color: #363a41; gap: 2px; padding: 0 7px; }
.btn svg { width: 12px; height: 12px; }
.find { margin-left: auto; }
.group { display: flex; justify-content: flex-end; }
.group .btn:first-child { border-radius: 3px 0 0 3px; border-right: 0; }
.group .btn:last-child { border-radius: 0 3px 3px 0; border-left: 0; width: 24px; padding: 0; }
.rail { flex: 0 0 185px; display: flex; flex-direction: column; gap: 18px; }
.rail p { padding: 14px 15px 17px; line-height: 15px; }
.update { width: calc(100% - 30px); margin: 14px 15px 18px; }
.switch { appearance: none; margin: 0 1px 0 auto; width: 36px; height: 18px; border-radius: 9px; background: #dc524d; padding: 1px; }
.switch::before { content: ""; display: block; width: 16px; height: 16px; border-radius: 50%; background: #fff; }
.switch:checked::before { margin-left: auto; }

/* taskbar */
.taskbar { height: 40px; flex: none; display: flex; background: linear-gradient(90deg, #22363f, #203140 60%, #1b2944); color: #fff; }
.start { width: 48px; }
.tsearch { flex: 0 1 344px; background: #f2f2f2; border: 1px solid #bbb; display: flex; align-items: center; padding-left: 12px; gap: 11px; }
.tsearch input { flex: 1; min-width: 0; border: 0; outline: 0; background: none; font-size: 14px; padding: 0; }
.tsearch input::placeholder { color: #333; opacity: 1; }
.app { width: 48px; margin-right: 1px; }
.app svg { width: 24px; height: 24px; }
.tv { margin-right: 3px; }
.hot { background: #4c5d65; border-bottom: 2px solid #a9dbff; }
.run { background: linear-gradient(#a9dbff, #a9dbff) center bottom / 40px 2px no-repeat; }
.tray { margin-left: auto; display: flex; align-items: center; gap: 8px; padding-right: 16px; }
.clock { display: flex; flex-direction: column; align-items: center; font-size: 11px; line-height: 18px; width: 56px; }
.note { width: 26px; height: 26px; margin-left: 8px; }
.five { font-size: 11px; fill: #fff; }
```
